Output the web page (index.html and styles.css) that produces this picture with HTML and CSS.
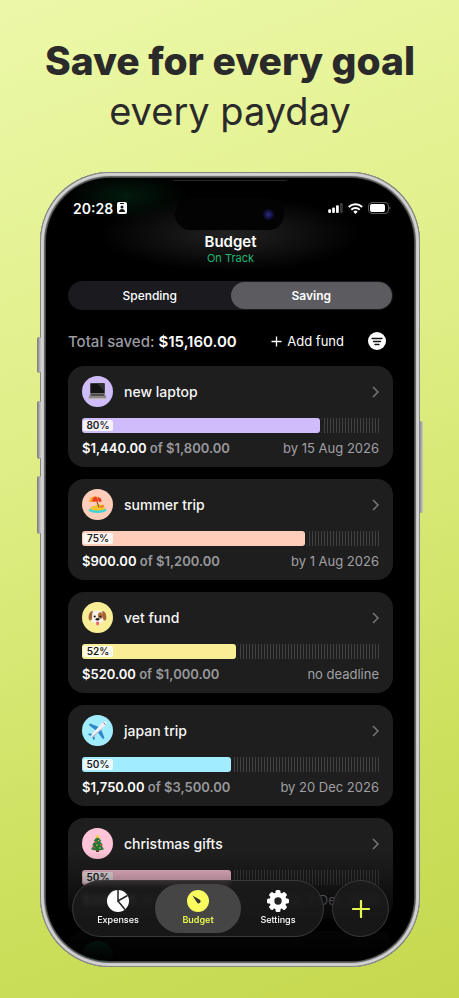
FILE: index.html
```html
<!DOCTYPE html>
<html lang="en">
<head>
    <meta charset="UTF-8">
    <meta name="viewport" content="width=device-width, initial-scale=1.0">
    <title>Save for every goal</title>
    <link rel="stylesheet" href="styles.css">
</head>
<body>
    <h1 class="headline"><strong>Save for every goal</strong><span>every payday</span></h1>

    <div class="phone">
        <!-- side buttons -->
        <span class="side-btn action"></span>
        <span class="side-btn vol-up"></span>
        <span class="side-btn vol-down"></span>
        <span class="side-btn power"></span>

        <div class="screen">
            <div class="glow"></div>
            <div class="earpiece"></div>
            <div class="island"><span class="lens"></span></div>

            <div class="status-bar">
                <div class="time">
                    20:28
                    <svg width="10" height="12" viewBox="0 0 10 12"><rect width="10" height="12" rx="2" fill="#fff"/><rect x="3" y="1" width="4" height="1" fill="#111"/><circle cx="5" cy="5" r="1.5" fill="#111"/><path d="M2 10c0-4 6-4 6 0z" fill="#111"/></svg>
                </div>
                <div class="signals">
                    <svg width="15" height="10" viewBox="0 0 16 11"><rect x="0" y="7" width="3" height="4" rx="1" fill="#fff"/><rect x="4.300" y="5" width="3" height="6" rx="1" fill="#fff"/><rect x="8.600" y="2.500" width="3" height="8.500" rx="1" fill="#fff"/><rect x="13" y="0" width="3" height="11" rx="1" fill="#3a3a3a"/></svg>
                    <svg width="15" height="11" viewBox="0 0 15 11"><g fill="none" stroke="#fff" stroke-width="2"><path d="M.8 4a9.500 9.500 0 0 1 13.400 0"/><path d="M3.300 6.700a6 6 0 0 1 8.400 0"/></g><path d="M7.500 11L5.300 8.700a3 3 0 0 1 4.400 0z" fill="#fff"/></svg>
                    <svg width="23" height="12" viewBox="0 0 23 12"><rect x=".5" y=".5" width="20" height="11" rx="3.500" fill="none" stroke="#5a5a5a"/><rect x="2" y="2" width="15" height="8" rx="2" fill="#fff"/><path d="M21.500 4.200c1.200.6 1.200 3 0 3.600z" fill="#777"/></svg>
                </div>
            </div>

            <header class="title">
                <h2>Budget</h2>
                <p>On Track</p>
            </header>

            <div class="segmented">
                <button type="button">Spending</button>
                <button type="button" class="active">Saving</button>
            </div>

            <div class="summary">
                <p>Total saved: <b>$15,160.00</b></p>
                <button type="button" class="add-fund">
                    <svg width="11" height="11" viewBox="0 0 11 11"><path d="M5.500 .5v10M.5 5.500h10" stroke="#fff" stroke-width="1.300"/></svg>
                    Add fund
                </button>
                <button type="button" class="filter" aria-label="Filter">
                    <svg width="18" height="18" viewBox="0 0 18 18"><circle cx="9" cy="9" r="9" fill="#fff"/><path d="M4 6.500h10M5.500 9.500h7M7 12.500h4" stroke="#111" stroke-width="1.400" stroke-linecap="round"/></svg>
                </button>
            </div>

            <div class="funds">
                <article class="card laptop">
                    <div class="card-head">
                        <span class="badge">
                            <svg width="19" height="19" viewBox="0 0 19 19"><rect x="2" y="1" width="15" height="11" rx="1" fill="#555"/><rect x="2.800" y="1.600" width="13.400" height="9.400" fill="#151515"/><path d="M9 1.600h7.200V9z" fill="#303030"/><path d="M2 11.500h15l1.500 5H.5z" fill="#8d8885"/><path d="M3 12.200h13l.5 1.600H2.500z" fill="#3d3b3a"/><path d="M.5 16.500h18v1H.5z" fill="#c7c2c0"/></svg>
                        </span>
                        <h3>new laptop</h3>
                        <svg class="chevron" width="7" height="12" viewBox="0 0 7 12"><path d="M1 1l5 5-5 5"/></svg>
                    </div>
                    <div class="bar"><div class="fill" style="width: 80%"><span>80%</span></div></div>
                    <div class="card-foot"><p><b>$1,440.00</b> of $1,800.00</p><time>by 15 Aug 2026</time></div>
                </article>

                <article class="card summer">
                    <div class="card-head">
                        <span class="badge">
                            <svg width="19" height="19" viewBox="0 0 19 19"><ellipse cx="9.500" cy="15" rx="9" ry="3" fill="#3fd3dc"/><path d="M2 14c2-4 5-2.500 7-4 3-2 7 0 8 4-4 2-11 2-15 0z" fill="#f7c52f"/><path d="M8 4l3 8.500" stroke="#9b5a22" stroke-width="1.200"/><path d="M1.200 7C1 2 7 0 12 3l1.500 3.500z" fill="#f3aa24"/><path d="M4 6.400C4.500 3 6 2 7.500 1.500c1.500 1 2.500 2.500 2.800 5z" fill="#ee3b2c"/><path d="M9.500 2c3 .5 4.500 2.500 4 4.500l-2.300.2z" fill="#e92f2b"/><path d="M11 12l4-2.500 1.500 2-3 1.500z" fill="#ef7b31"/></svg>
                        </span>
                        <h3>summer trip</h3>
                        <svg class="chevron" width="7" height="12" viewBox="0 0 7 12"><path d="M1 1l5 5-5 5"/></svg>
                    </div>
                    <div class="bar"><div class="fill" style="width: 75%"><span>75%</span></div></div>
                    <div class="card-foot"><p><b>$900.00</b> of $1,200.00</p><time>by 1 Aug 2026</time></div>
                </article>

                <article class="card vet">
                    <div class="card-head">
                        <span class="badge">
                            <svg width="19" height="19" viewBox="0 0 19 19"><path d="M4 4c2-2 9-2 11 0 2 3 2 7 0 9.500-2.500 2.500-8.500 2.500-11 0C2 11 2 7 4 4z" fill="#f6f2ec"/><path d="M5 3C2 2.500 0 7 .8 11c.5 2.500 3 1.500 3.200-.5C4.300 8 4 5 5 3z" fill="#a2653a"/><path d="M14 3c3-.5 5 4 4.200 8-.5 2.500-3 1.500-3.200-.5C14.700 8 15 5 14 3z" fill="#a2653a"/><ellipse cx="12.500" cy="7.500" rx="2.600" ry="3.200" fill="#b5713c"/><circle cx="6.700" cy="8.500" r="1.100" fill="#221a18"/><circle cx="12.400" cy="8.500" r="1.100" fill="#221a18"/><ellipse cx="9.500" cy="11.300" rx="1.900" ry="1.300" fill="#221a18"/><path d="M8.200 13.700h2.800v2c0 2-2.800 2-2.800 0z" fill="#ee5f72"/></svg>
                        </span>
                        <h3>vet fund</h3>
                        <svg class="chevron" width="7" height="12" viewBox="0 0 7 12"><path d="M1 1l5 5-5 5"/></svg>
                    </div>
                    <div class="bar"><div class="fill" style="width: 52%"><span>52%</span></div></div>
                    <div class="card-foot"><p><b>$520.00</b> of $1,000.00</p><span>no deadline</span></div>
                </article>

                <article class="card japan">
                    <div class="card-head">
                        <span class="badge">
                            <svg width="19" height="19" viewBox="0 0 19 19"><path d="M11 6L2 2.500.8 4l7 5.500zM13 8l3.500 9-1.500 1.200L9.500 11z" fill="#2f87c9"/><path d="M5 13l-4-.6-1 1 3.800 2 1.800 3.800 1.200-1L6.300 14z" fill="#2f87c9"/><path d="M18.300.7c1 1 0 3-1.500 4.500L6.500 15c-1.500 1.300-3 2-3.500 1.500S3.200 14 4.500 12.500L13.800 2.300C15.300.8 17.300-.2 18.300.7z" fill="#eef0f4"/><path d="M17.500 4.300L6.500 15c-1.500 1.300-3 2-3.500 1.500z" fill="#a9b2bf"/><path d="M15.500 1.700l2 1.900" stroke="#3b4654" stroke-width=".8"/></svg>
                        </span>
                        <h3>japan trip</h3>
                        <svg class="chevron" width="7" height="12" viewBox="0 0 7 12"><path d="M1 1l5 5-5 5"/></svg>
                    </div>
                    <div class="bar"><div class="fill" style="width: 50%"><span>50%</span></div></div>
                    <div class="card-foot"><p><b>$1,750.00</b> of $3,500.00</p><time>by 20 Dec 2026</time></div>
                </article>

                <article class="card christmas">
                    <div class="card-head">
                        <span class="badge">
                            <svg width="19" height="19" viewBox="0 0 19 19"><path d="M8 14h3v4H8z" fill="#6d3a20"/><path d="M9.500 2l3.800 5-1.300.3 3 4-1.500.3 2.500 3.600c-4 1.700-9 1.700-13 0l2.500-3.600-1.500-.3 3-4L5.700 7z" fill="#23763a"/><path d="M9.500.2l.7 1.500 1.600.2-1.200 1 .3 1.600-1.400-.8-1.400.8.3-1.600-1.200-1 1.600-.2z" fill="#f8cf33"/><g fill="#ef4a3c"><circle cx="7.800" cy="8" r=".9"/><circle cx="12.500" cy="10.800" r=".9"/><circle cx="6.200" cy="13.500" r=".9"/></g><g fill="#f5c63a"><circle cx="10.500" cy="6.500" r=".7"/><circle cx="8.800" cy="11.200" r=".8"/><circle cx="12" cy="14" r=".8"/></g></svg>
                        </span>
                        <h3>christmas gifts</h3>
                        <svg class="chevron" width="7" height="12" viewBox="0 0 7 12"><path d="M1 1l5 5-5 5"/></svg>
                    </div>
                    <div class="bar"><div class="fill" style="width: 50%"><span>50%</span></div></div>
                    <div class="card-foot"><p><b>$300.00</b> of $600.00</p><time>by 7 Dec 2026</time></div>
                </article>

                <article class="card next">
                    <div class="card-head"><span class="badge"></span></div>
                </article>
            </div>

            <div class="fade"></div>

            <nav class="dock">
                <div class="tabs">
                    <a href="#expenses">
                        <svg width="22" height="22" viewBox="0 0 22 22"><circle cx="11" cy="11" r="11" fill="#fff"/><path d="M11 0v11l9.500-5.500M11 11l7 8.500" fill="none" stroke="#222" stroke-width="1.500"/></svg>
                        Expenses
                    </a>
                    <a href="#budget" class="active">
                        <svg width="22" height="22" viewBox="0 0 22 22"><circle cx="11" cy="11" r="11" fill="#f9fb5e"/><path d="M5.500 5.500l7.300 4.300a2 2 0 1 1-2.800 2.800z" fill="#333"/></svg>
                        Budget
                    </a>
                    <a href="#settings">
                        <svg width="22" height="22" viewBox="0 0 22 22"><g fill="#fff"><rect x="8.500" y="0" width="5" height="22" rx="1.500"/><rect x="8.500" y="0" width="5" height="22" rx="1.500" transform="rotate(45 11 11)"/><rect x="8.500" y="0" width="5" height="22" rx="1.500" transform="rotate(90 11 11)"/><rect x="8.500" y="0" width="5" height="22" rx="1.500" transform="rotate(135 11 11)"/><circle cx="11" cy="11" r="8.500"/></g><circle cx="11" cy="11" r="3.700" fill="#242424"/></svg>
                        Settings
                    </a>
                </div>
                <button type="button" class="plus" aria-label="Add">
                    <svg width="18" height="18" viewBox="0 0 18 18"><path d="M9 1v16M1 9h16" stroke="#e6f84f" stroke-width="2.200" stroke-linecap="round"/></svg>
                </button>
            </nav>
        </div>
    </div>
</body>
</html>
```
FILE: styles.css
```css
* {
    box-sizing: border-box;
    margin: 0;
    padding: 0;
}

body {
    display: flex;
    flex-direction: column;
    height: 100vh;
    padding: 36px 39px 31px 40px;
    overflow: hidden;
    font-family: Inter, "Liberation Sans", sans-serif;
    color: #fff;
    background: linear-gradient(160deg, #ecf8a8 0%, #dfee86 40%, #cee160 75%, #c5d84e 100%);
}

svg {
    display: block;
    flex: none;
}

button {
    border: 0;
    background: none;
    color: inherit;
    font-family: inherit;
    cursor: pointer;
}

.headline {
    display: flex;
    flex-direction: column;
    align-items: center;
    margin-bottom: 36px;
    font-size: 38px;
    line-height: 50px;
    font-weight: 400;
    color: #2b2a2b;
    white-space: nowrap;
}

.headline strong {
    font-size: 39px;
    font-weight: 800;
}

/* phone body */
.phone {
    position: relative;
    flex: 1;
    min-height: 0;
    padding: 6px;
    border-radius: 70px;
    background: #000;
    box-shadow: inset 0 0 0 1px #85857f, inset 0 0 1px 4px #d2d2d2, inset 0 0 3px 6px #6b6b6b;
}

.side-btn {
    position: absolute;
    left: -3px;
    width: 4px;
    border-radius: 2px;
    background: linear-gradient(90deg, #777, #ccc);
}

.action {
    top: 165px;
    height: 36px;
}

.vol-up {
    top: 229px;
    height: 58px;
}

.vol-down {
    top: 304px;
    height: 58px;
}

.power {
    top: 249px;
    right: -3px;
    left: auto;
    height: 92px;
}

.screen {
    position: relative;
    height: 100%;
    padding: 20px 21px 0 22px;
    border-radius: 64px;
    overflow: hidden;
    background: #000;
}

/* soft light behind the header */
.glow {
    position: absolute;
    top: 0;
    left: 0;
    width: 100%;
    height: 110px;
    background:
        radial-gradient(ellipse 60px 24px at 80px 18px, #031a0d, transparent),
        radial-gradient(ellipse 130px 38px at 50% 56px, #222, transparent);
}

.earpiece {
    position: absolute;
    top: 0;
    left: 50%;
    width: 116px;
    height: 3px;
    margin-left: -58px;
    border-radius: 0 0 6px 6px;
    border-bottom: 1px solid #262626;
}

.island {
    position: absolute;
    top: 21px;
    left: 50%;
    width: 109px;
    height: 31px;
    margin-left: -55px;
    border-radius: 16px;
    background: #030303;
}

.lens {
    position: absolute;
    top: 10px;
    right: 10px;
    width: 11px;
    height: 11px;
    border-radius: 50%;
    background: radial-gradient(circle, #27277a 10%, #0c0c2c 60%, #050508);
}

.status-bar {
    position: relative;
    display: flex;
    justify-content: space-between;
    align-items: center;
    height: 20px;
    padding: 0 2px 0 5px;
}

.time {
    display: flex;
    align-items: center;
    gap: 4px;
    font-size: 14px;
    font-weight: 600;
}

.signals {
    display: flex;
    align-items: center;
    gap: 5px;
}

.title {
    position: relative;
    margin-top: 15px;
    text-align: center;
}

.title h2 {
    font-size: 15px;
    line-height: 18px;
    font-weight: 600;
}

.title p {
    font-size: 11px;
    line-height: 14px;
    color: #20b574;
}

.segmented {
    display: flex;
    margin-top: 16px;
    padding: 1px;
    border-radius: 15px;
    background: #1b1b1f;
}

.segmented button {
    flex: 1;
    height: 27px;
    border-radius: 14px;
    font-size: 12px;
    font-weight: 500;
}

.segmented .active {
    background: #5b5b60;
    font-weight: 600;
}

.summary {
    display: flex;
    align-items: center;
    margin-top: 20px;
    padding-right: 7px;
    height: 22px;
}

.summary p {
    flex: 1;
    font-size: 15px;
    font-weight: 500;
    color: #9b9ba0;
    white-space: nowrap;
}

.summary b {
    font-weight: 600;
    color: #fff;
}

.add-fund {
    display: flex;
    align-items: center;
    gap: 5px;
    margin-right: 24px;
    font-size: 13px;
    white-space: nowrap;
}

/* list of funds */
.funds {
    display: flex;
    flex-direction: column;
    gap: 12px;
    margin-top: 14px;
}

.card {
    padding: 10px 14px;
    border-radius: 16px;
    background: #1e1e1e;
}

.card-head {
    display: flex;
    align-items: center;
    gap: 11px;
}

.badge {
    display: flex;
    align-items: center;
    justify-content: center;
    width: 31px;
    height: 31px;
    border-radius: 50%;
    background: var(--tint);
}

.card h3 {
    flex: 1;
    font-size: 14px;
    font-weight: 500;
    color: #f6f6f6;
}

.chevron {
    fill: none;
    stroke: #77777a;
    stroke-width: 1.5;
}

.bar {
    height: 15px;
    margin-top: 11px;
    background: repeating-linear-gradient(90deg, #1e1e1e 0 2px, #414141 2px 3px);
}

.fill {
    height: 100%;
    padding: 2px 1px;
    border-radius: 3px;
    background: var(--tint);
    box-shadow: 1px 0 0 1px #1e1e1e;
}

.fill span {
    display: block;
    width: 30px;
    border-radius: 2px;
    background: rgba(255, 255, 255, 0.8);
    font-size: 10px;
    line-height: 11px;
    font-weight: 600;
    text-align: center;
    color: #1c1c1c;
}

.card-foot {
    display: flex;
    justify-content: space-between;
    margin-top: 6px;
    font-size: 13px;
    line-height: 18px;
    color: #a0a0a4;
    white-space: nowrap;
}

.card-foot p {
    font-weight: 600;
    color: #98989c;
}

.card-foot b {
    font-weight: 600;
    color: #fff;
}

.laptop { --tint: #cfbdfb; }
.summer { --tint: #ffcdb9; }
.vet { --tint: #f9ee95; }
.japan { --tint: #a2ecff; }
.christmas { --tint: #ffc4d8; }
.next { --tint: #2fae86; }

.fade {
    position: absolute;
    right: 0;
    bottom: 0;
    left: 0;
    height: 110px;
    background: linear-gradient(transparent, rgba(0, 0, 0, 0.3) 25%, rgba(0, 0, 0, 0.8) 65%, #000);
}

/* bottom navigation */
.dock {
    position: absolute;
    right: 25px;
    bottom: 24px;
    left: 26px;
    display: flex;
    gap: 8px;
    height: 57px;
}

.tabs {
    flex: 1;
    display: flex;
    padding: 3px 5px;
    border: 1px solid #3a3a3a;
    border-radius: 29px;
    background: rgba(28, 28, 28, 0.84);
    backdrop-filter: blur(2px);
}

.tabs a {
    flex: 1;
    display: flex;
    flex-direction: column;
    align-items: center;
    justify-content: center;
    gap: 1px;
    border-radius: 25px;
    font-size: 9px;
    line-height: 14px;
    font-weight: 500;
    color: #fff;
    text-decoration: none;
}

.tabs .active {
    margin: 0 -3px;
    padding: 0 3px;
    background: #454545;
    font-weight: 600;
    color: #e9f64f;
}

.plus {
    display: flex;
    align-items: center;
    justify-content: center;
    width: 57px;
    border: 1px solid #3a3a3a;
    border-radius: 50%;
    background: rgba(28, 28, 28, 0.84);
    backdrop-filter: blur(2px);
}
```
